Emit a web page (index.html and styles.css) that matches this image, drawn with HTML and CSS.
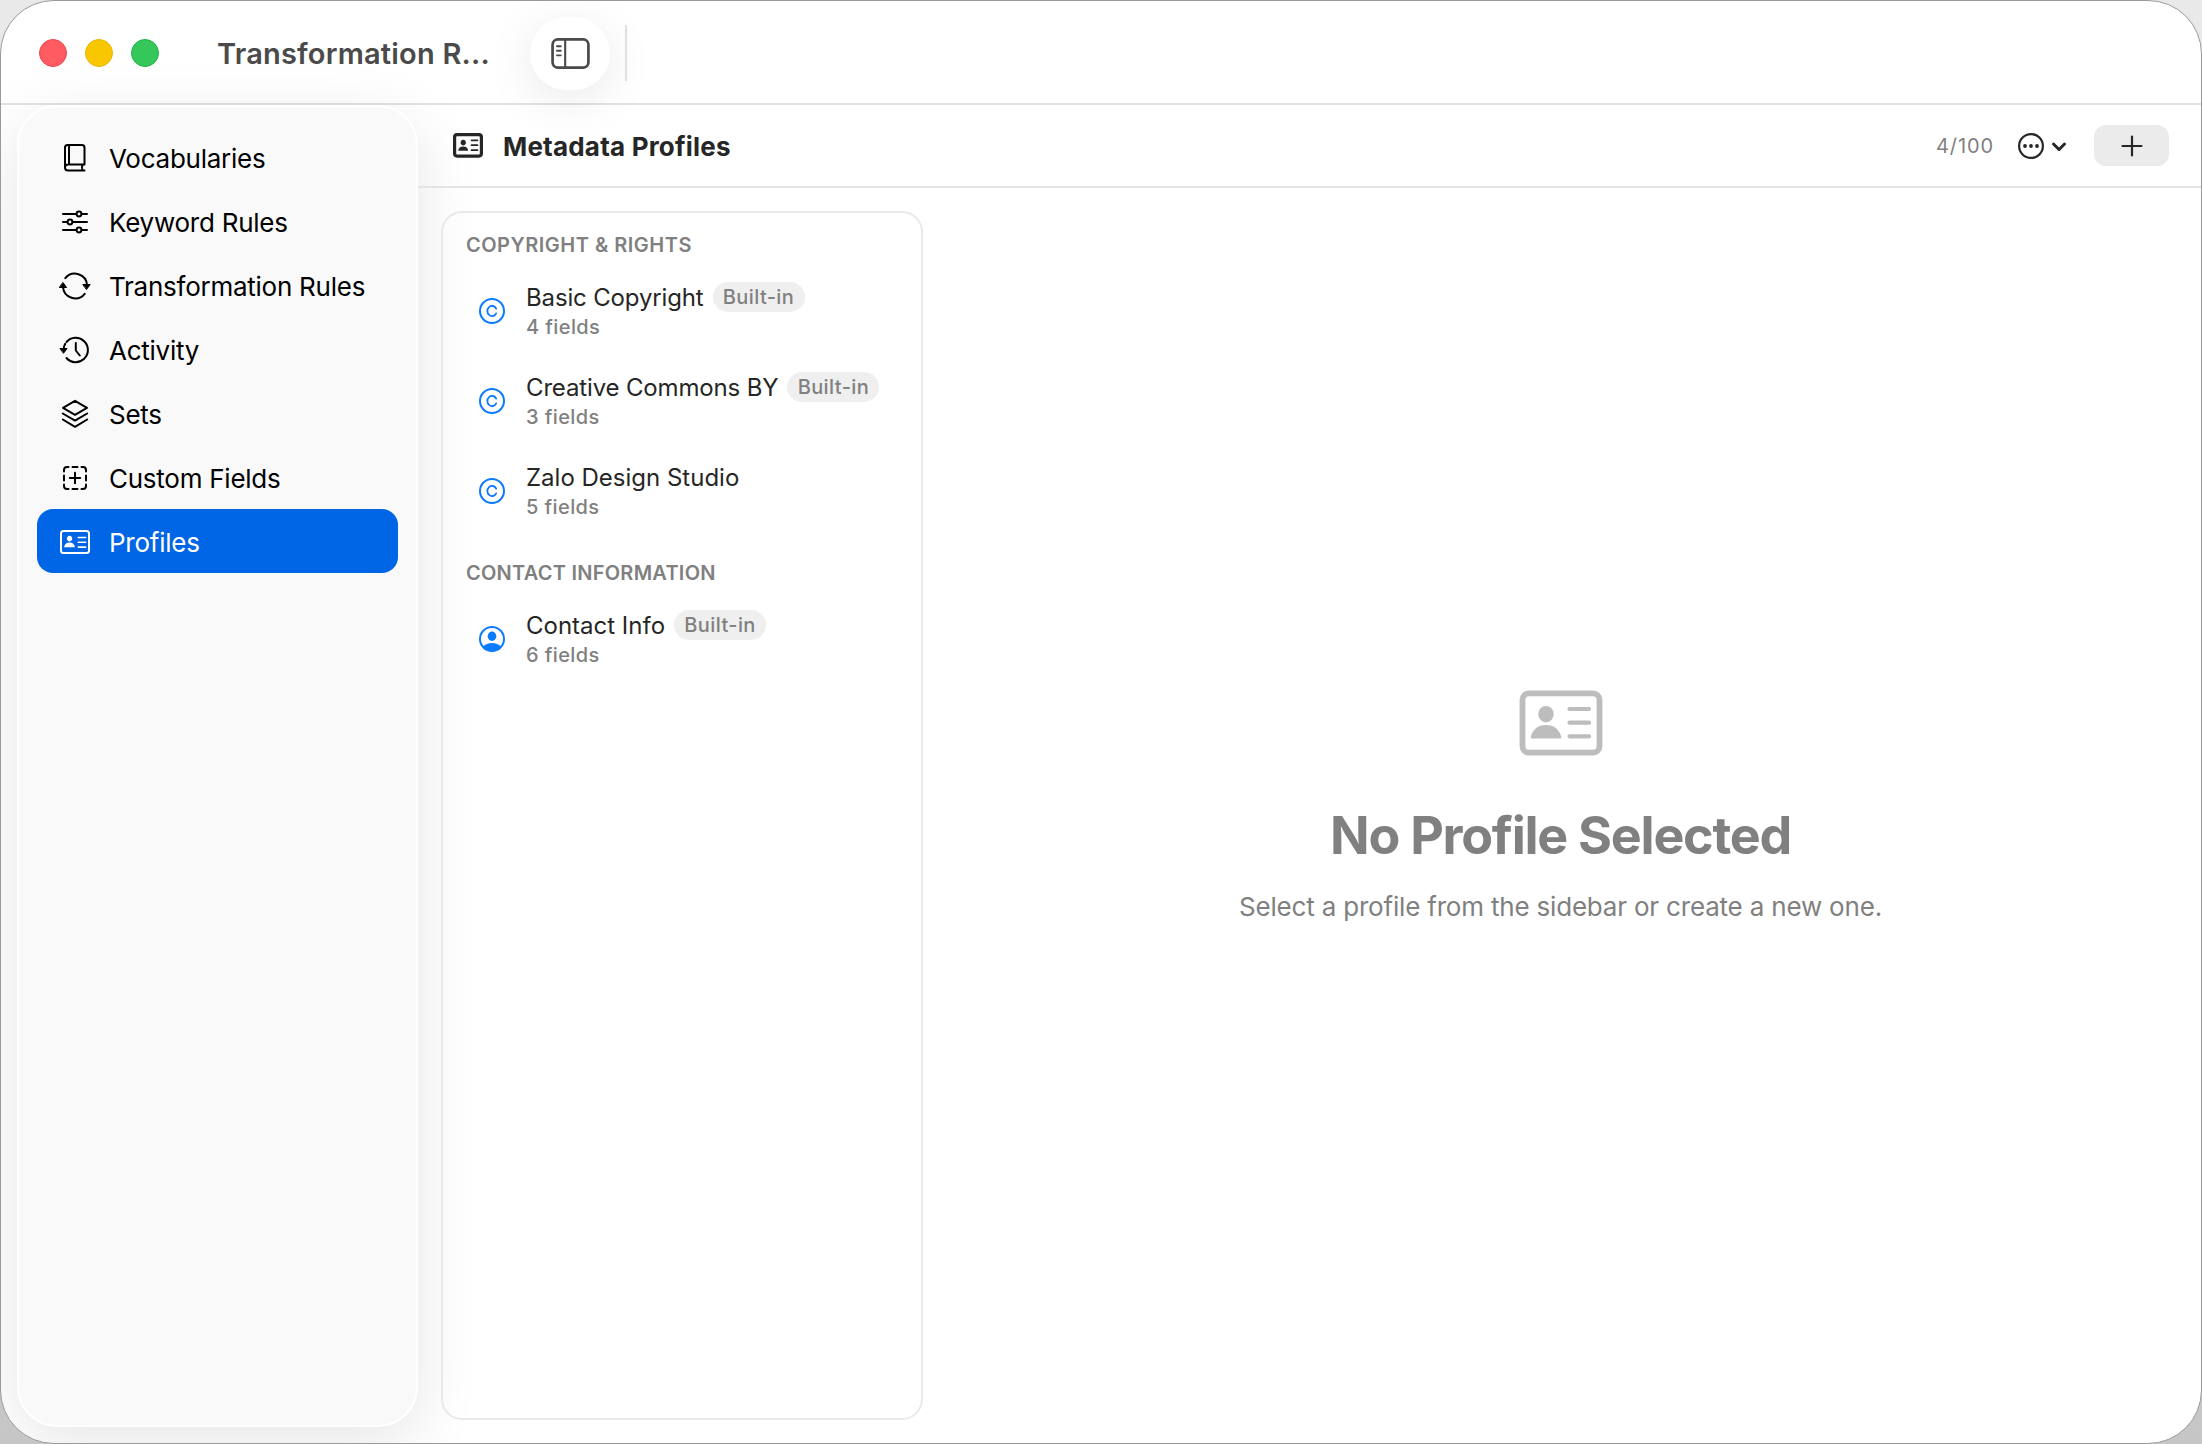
FILE: index.html
```html
<!DOCTYPE html>
<html lang="en">
<head>
  <meta charset="UTF-8">
  <meta name="viewport" content="width=device-width, initial-scale=1.0">
  <title>Metadata Profiles</title>
  <link rel="stylesheet" href="styles.css">
</head>
<body>
  <svg class="defs" aria-hidden="true">
    <symbol id="copyright" viewBox="0 0 26 26">
      <circle cx="13" cy="13" r="12" fill="none" stroke="currentColor" stroke-width="2"/>
      <path d="M17.2 10.6A4.7 5.1 0 1 0 17.2 15.4" fill="none" stroke="currentColor" stroke-width="1.8" stroke-linecap="round"/>
    </symbol>
  </svg>

  <div class="window">
    <header class="titlebar">
      <div class="lights">
        <span class="light red"></span>
        <span class="light yellow"></span>
        <span class="light green"></span>
      </div>
      <div class="window-title">Transformation R...</div>
      <button class="toggle" aria-label="Toggle sidebar">
        <svg width="39" height="31" viewBox="0 0 40 32" fill="none" stroke="#4a4a4a" stroke-linecap="round">
          <rect x="1.5" y="1.5" width="37" height="29" rx="5.5" stroke-width="2.8"/>
          <path d="M14.5 2v28" stroke-width="2.2"/>
          <path d="M6 8.5h4M6 13.2h4M6 17.9h4" stroke-width="1.9"/>
        </svg>
      </button>
      <span class="divider"></span>
    </header>

    <div class="body">
      <nav class="sidebar">
        <a class="nav-item">
          <svg class="nav-icon" width="32" height="32" viewBox="0 0 32 32">
            <path d="M6 25.500V5.500Q6 3 8.500 3H23Q25.500 3 25.500 5.500V22.500H9Q6 22.500 6 25.500T9 28.500H25.500M10 3v19.500M23.500 23q-1.200 2.500 0 5"/>
          </svg>
          <span>Vocabularies</span>
        </a>
        <a class="nav-item">
          <svg class="nav-icon" width="32" height="32" viewBox="0 0 32 32">
            <path d="M4 8h13M23 8h5M4 16h4M14 16h14M4 24h13M23 24h5"/>
            <circle cx="20" cy="8" r="2.4"/><circle cx="11" cy="16" r="2.4"/><circle cx="20" cy="24" r="2.4"/>
          </svg>
          <span>Keyword Rules</span>
        </a>
        <a class="nav-item">
          <svg class="nav-icon" width="32" height="32" viewBox="0 0 32 32">
            <path d="M6.300 8.200A12.200 12.200 0 0 1 28 15M25.700 23.800A12.200 12.200 0 0 1 4 17"/>
            <path d="M24.200 14.500h7l-3.500 4.800zM.6 17.500h7L4.100 12.700z" fill="currentColor" stroke-width="1"/>
          </svg>
          <span>Transformation Rules</span>
        </a>
        <a class="nav-item">
          <svg class="nav-icon" width="32" height="32" viewBox="0 0 32 32">
            <path d="M7.500 8A12.200 12.200 0 1 1 7.500 24M6.200 9.800A12.200 12.200 0 0 0 4.700 15M16.800 9v7.500l4 5"/>
            <path d="M1.300 14.500h6.800L4.700 19z" fill="currentColor" stroke-width="1"/>
          </svg>
          <span>Activity</span>
        </a>
        <a class="nav-item">
          <svg class="nav-icon" width="32" height="32" viewBox="0 0 32 32">
            <path d="M16 2.800L28 9.800 16 16.800 4 9.800zM3.800 15.500L16 22.600 28.200 15.500M3.800 21.500L16 28.800 28.200 21.500"/>
          </svg>
          <span>Sets</span>
        </a>
        <a class="nav-item">
          <svg class="nav-icon" width="32" height="32" viewBox="0 0 32 32">
            <path d="M5 9.500V8q0-3 3-3h1.500M13.500 5h5M22.500 5H24q3 0 3 3v1.500M27 13.500v5M27 22.500V24q0 3-3 3h-1.500M18.500 27h-5M9.500 27H8q-3 0-3-3v-1.500M5 18.500v-5M10.800 16h10.400M16 10.800v10.400"/>
          </svg>
          <span>Custom Fields</span>
        </a>
        <a class="nav-item selected">
          <svg class="nav-icon" width="32" height="32" viewBox="0 0 32 32">
            <rect x="2" y="5" width="28" height="22" rx="2.500"/>
            <path d="M19.300 11.500h7.400M19.300 16.300h7.400M19.300 21.100h7.400" stroke-width="1.600"/>
            <path d="M5 21.300q.8-4.800 5.500-4.800t5.500 4.800zM10.500 15.500a2.700 2.900 0 1 1 .1 0z" fill="currentColor" stroke="none"/>
          </svg>
          <span>Profiles</span>
        </a>
      </nav>

      <main class="main">
        <div class="toolbar">
          <svg class="toolbar-icon" width="30" height="25" viewBox="0 0 30 25" fill="none" stroke="#262626" stroke-linecap="round">
            <rect x="1.600" y="1.600" width="26.800" height="21.500" rx="2.500" stroke-width="3.200"/>
            <path d="M18.500 7.300h6M18.500 12.200h6M18.500 17.100h6" stroke-width="1.700"/>
            <path d="M5.200 17.800q.6-4.200 5-4.200t5 4.200zM10.200 12.500a2.700 2.900 0 1 1 .1 0z" fill="#262626" stroke="none"/>
          </svg>
          <h1 class="toolbar-title">Metadata Profiles</h1>
          <span class="count">4/100</span>
          <button class="more" aria-label="More">
            <svg width="50" height="28" viewBox="0 0 50 28" fill="none" stroke="#262626" stroke-linecap="round" stroke-linejoin="round">
              <circle cx="14" cy="14" r="11.900" stroke-width="2.200"/>
              <g fill="#262626" stroke="none"><circle cx="8" cy="14" r="1.900"/><circle cx="14" cy="14" r="1.900"/><circle cx="20" cy="14" r="1.900"/></g>
              <path d="M36.500 12l5.500 5.500 5.500-5.500" stroke-width="3"/>
            </svg>
          </button>
          <button class="add" aria-label="Add profile">
            <svg width="22" height="22" viewBox="0 0 22 22" stroke="#262626" stroke-width="2.200" stroke-linecap="round"><path d="M11 1.500v19M1.500 11h19"/></svg>
          </button>
        </div>

        <div class="content">
          <section class="profiles">
            <h2 class="group-title first">COPYRIGHT &amp; RIGHTS</h2>
            <div class="profile">
              <svg class="profile-icon"><use href="#copyright"/></svg>
              <div class="profile-text">
                <div class="profile-name"><span class="name long">Basic Copyright</span><span class="badge">Built-in</span></div>
                <div class="fields">4 fields</div>
              </div>
            </div>
            <div class="profile">
              <svg class="profile-icon"><use href="#copyright"/></svg>
              <div class="profile-text">
                <div class="profile-name"><span class="name long">Creative Commons BY</span><span class="badge">Built-in</span></div>
                <div class="fields">3 fields</div>
              </div>
            </div>
            <div class="profile">
              <svg class="profile-icon"><use href="#copyright"/></svg>
              <div class="profile-text">
                <div class="profile-name"><span class="name">Zalo Design Studio</span></div>
                <div class="fields">5 fields</div>
              </div>
            </div>
            <h2 class="group-title">CONTACT INFORMATION</h2>
            <div class="profile">
              <svg class="profile-icon" viewBox="0 0 26 26">
                <circle cx="13" cy="13" r="12" fill="none" stroke="currentColor" stroke-width="2"/>
                <ellipse cx="13" cy="10.300" rx="4.300" ry="4.700" fill="currentColor"/>
                <path d="M4 20.500Q7.500 17 13 17t9 3.500Q18.500 25.300 13 25.300T4 20.500z" fill="currentColor"/>
              </svg>
              <div class="profile-text">
                <div class="profile-name"><span class="name">Contact Info</span><span class="badge">Built-in</span></div>
                <div class="fields">6 fields</div>
              </div>
            </div>
          </section>

          <section class="empty">
            <svg class="empty-icon" width="84" height="66" viewBox="0 0 84 66" fill="none" stroke="#bdbdbd" stroke-linecap="round">
              <rect x="3.500" y="3.300" width="77" height="59.400" rx="6.500" stroke-width="5.800"/>
              <path d="M50.500 19h19.500M50.500 32.700h19.500M50.500 46.300h19.500" stroke-width="4.200"/>
              <path d="M13 48.500q-1.500 0-1.200-1.500C13.500 39.500 19 35 27 35s13.500 4.500 15.300 12q.3 1.500-1.200 1.500z" fill="#bdbdbd" stroke="none"/>
              <ellipse cx="27" cy="24.200" rx="7.700" ry="8.300" fill="#bdbdbd" stroke="none"/>
            </svg>
            <h2 class="empty-title">No Profile Selected</h2>
            <p class="empty-text">Select a profile from the sidebar or create a new one.</p>
          </section>
        </div>
      </main>
    </div>
  </div>
</body>
</html>
```

FILE: styles.css
```css
* {
  box-sizing: border-box;
}
body {
  margin: 0;
  height: 1444px;
  overflow: hidden;
  background: linear-gradient(#e9e9e9, #c6c6c6);
  font-family: Inter, sans-serif;
  color: #262626;
}
h1, h2, p {
  margin: 0;
}
button {
  border: none;
  padding: 0;
  background: none;
  display: flex;
  align-items: center;
  justify-content: center;
}
.defs {
  display: none;
}
.window {
  width: 2202px;
  height: 1444px;
  display: flex;
  flex-direction: column;
  background: #fff;
  border: 1px solid #999;
  border-radius: 54px;
  overflow: hidden;
}

/* title bar */
.titlebar {
  height: 104px;
  flex: none;
  display: flex;
  align-items: center;
  padding: 2px 0 0 38px;
  border-bottom: 2px solid #e2e2e2;
}
.lights {
  display: flex;
  gap: 18px;
}
.light {
  width: 28px;
  height: 28px;
  border-radius: 50%;
}
.red {
  background: #ff5b60;
  border: 1px solid #e8484e;
}
.yellow {
  background: #f9c700;
  border: 1px solid #e6b500;
}
.green {
  background: #35c759;
  border: 1px solid #22b347;
}
.window-title {
  width: 313px;
  margin-left: 58px;
  font-size: 29px;
  font-weight: 600;
  letter-spacing: 0.2px;
  color: #4a4a4a;
  white-space: nowrap;
}
.toggle {
  width: 80px;
  height: 73px;
  border-radius: 37px;
  background: #fff;
  box-shadow: 0 10px 50px rgba(0, 0, 0, 0.09);
}
.divider {
  width: 2px;
  height: 56px;
  margin-left: 15px;
  background: #e0e0e0;
}

/* sidebar */
.body {
  flex: 1;
  min-height: 0;
  display: flex;
}
.sidebar {
  width: 401px;
  height: 1322px;
  margin-left: 16px;
  flex: none;
  padding: 18px;
  background: #f9f9f9;
  border: 2px solid #fff;
  border-radius: 40px;
  box-shadow: 0 16px 64px rgba(0, 0, 0, 0.1);
}
.nav-item {
  height: 64px;
  width: 361px;
  display: flex;
  align-items: center;
  gap: 18px;
  padding: 2px 0 0 22px;
  border-radius: 16px;
  font-size: 26px;
  letter-spacing: -0.25px;
  color: #000;
  white-space: nowrap;
}
.nav-icon {
  fill: none;
  stroke: currentColor;
  stroke-width: 2;
  stroke-linecap: round;
  stroke-linejoin: round;
}
.selected {
  background: #0066e5;
  color: #fff;
}

/* main column */
.main {
  flex: 1;
  min-width: 0;
  display: flex;
  flex-direction: column;
}
.toolbar {
  height: 83px;
  flex: none;
  display: flex;
  align-items: center;
  padding: 0 32px 0 35px;
  border-bottom: 2px solid #e4e4e4;
}
.toolbar-title {
  margin-left: 20px;
  padding-top: 1px;
  flex: 1;
  font-size: 26px;
  font-weight: 700;
  letter-spacing: 0.2px;
}
.count {
  font-size: 20px;
  letter-spacing: 0.9px;
  color: #808080;
}
.more {
  margin-left: 23px;
}
.add {
  width: 75px;
  height: 41px;
  margin-left: 27px;
  border-radius: 12px;
  background: #ebebeb;
}
.content {
  flex: 1;
  min-height: 0;
  display: flex;
}

/* profile list */
.profiles {
  width: 482px;
  height: 1209px;
  margin: 23px 0 0 23px;
  flex: none;
  padding: 0 23px;
  border: 2px solid #e9e9e9;
  border-radius: 21px;
}
.group-title {
  margin: 24px 0 8px;
  height: 26px;
  line-height: 26px;
  font-size: 20px;
  font-weight: 600;
  letter-spacing: 0.25px;
  color: #808080;
  white-space: nowrap;
}
.group-title.first {
  margin-top: 19px;
  letter-spacing: 0.5px;
}
.profile {
  height: 90px;
  display: flex;
  align-items: center;
  gap: 21px;
  padding-left: 13px;
}
.profile-icon {
  width: 26px;
  height: 26px;
  flex: none;
  color: #0a7aff;
}
.profile-text {
  padding-top: 2px;
}
.profile-name {
  height: 30px;
  display: flex;
  align-items: center;
  gap: 9px;
}
.name {
  font-size: 24px;
  white-space: nowrap;
}
.name.long {
  letter-spacing: -0.15px;
}
.badge {
  height: 30px;
  line-height: 30px;
  width: 92px;
  border-radius: 15px;
  background: #efefef;
  text-align: center;
  font-size: 20px;
  font-weight: 500;
  letter-spacing: 0.4px;
  color: #808080;
  white-space: nowrap;
}
.fields {
  height: 30px;
  line-height: 30px;
  font-size: 20px;
  font-weight: 500;
  letter-spacing: 0.4px;
  color: #808080;
}

/* empty state */
.empty {
  flex: 1;
  display: flex;
  flex-direction: column;
  align-items: center;
  padding: 502px 3px 0 0;
  color: #808080;
}
.empty-title {
  margin-top: 48px;
  line-height: 64px;
  font-size: 52px;
  font-weight: 700;
  letter-spacing: -1.27px;
}
.empty-text {
  margin-top: 23px;
  line-height: 32px;
  font-size: 26px;
  letter-spacing: -0.19px;
}
```
